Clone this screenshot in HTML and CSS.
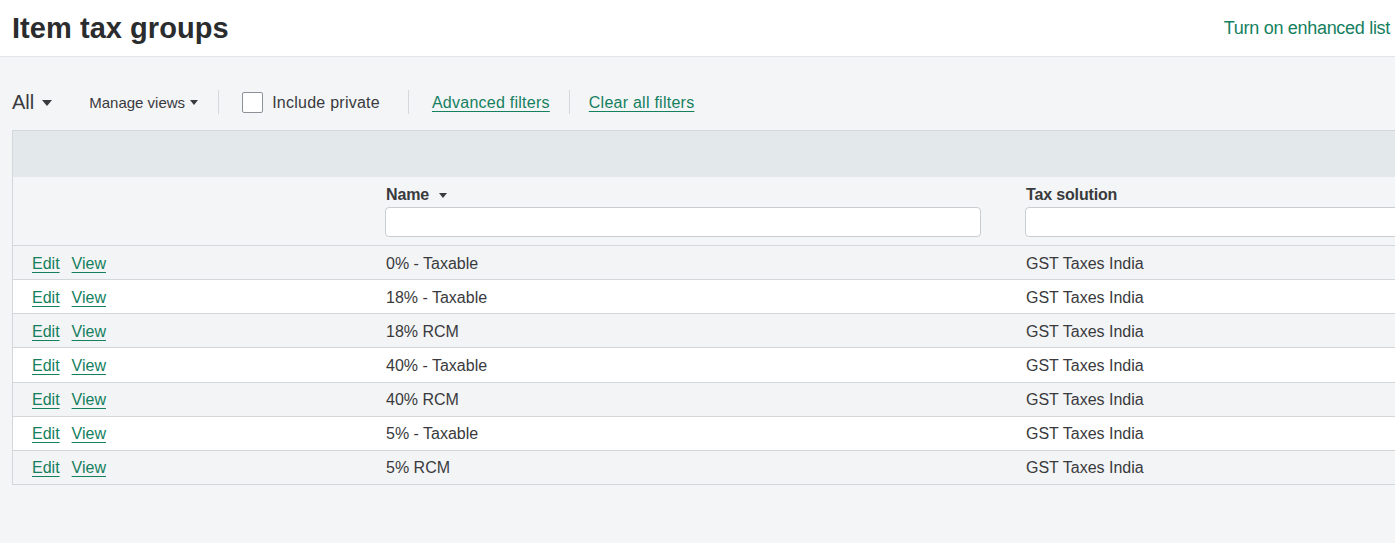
FILE: index.html
```html
<!DOCTYPE html>
<html lang="en">
<head>
<meta charset="utf-8">
<title>Item tax groups</title>
<link rel="stylesheet" href="styles.css">
</head>
<body>
<header class="page-header">
  <h1 class="page-title">Item tax groups</h1>
  <a class="enhanced-link" href="#">Turn on enhanced list</a>
</header>

<div class="toolbar">
  <button class="view-select">All <span class="caret caret-lg"></span></button>
  <button class="manage-views">Manage views <span class="caret caret-sm"></span></button>
  <span class="sep sep-a"></span>
  <label class="private"><span class="checkbox"></span><span class="private-text">Include private</span></label>
  <span class="sep sep-b"></span>
  <a class="filter-link" href="#">Advanced filters</a>
  <span class="sep sep-c"></span>
  <a class="filter-link" href="#">Clear all filters</a>
</div>

<div class="table">
  <div class="band"></div>
  <div class="row head-row">
    <div class="cell actions"></div>
    <div class="cell">
      <div class="col-label">Name <span class="caret caret-sm"></span></div>
      <input class="col-filter" type="text">
    </div>
    <div class="cell">
      <div class="col-label">Tax solution</div>
      <input class="col-filter" type="text">
    </div>
  </div>

  <div class="row data-row">
    <div class="cell actions"><a href="#">Edit</a><a href="#">View</a></div>
    <div class="cell">0% - Taxable</div>
    <div class="cell">GST Taxes India</div>
  </div>
  <div class="row data-row">
    <div class="cell actions"><a href="#">Edit</a><a href="#">View</a></div>
    <div class="cell">18% - Taxable</div>
    <div class="cell">GST Taxes India</div>
  </div>
  <div class="row data-row">
    <div class="cell actions"><a href="#">Edit</a><a href="#">View</a></div>
    <div class="cell">18% RCM</div>
    <div class="cell">GST Taxes India</div>
  </div>
  <div class="row data-row">
    <div class="cell actions"><a href="#">Edit</a><a href="#">View</a></div>
    <div class="cell">40% - Taxable</div>
    <div class="cell">GST Taxes India</div>
  </div>
  <div class="row data-row">
    <div class="cell actions"><a href="#">Edit</a><a href="#">View</a></div>
    <div class="cell">40% RCM</div>
    <div class="cell">GST Taxes India</div>
  </div>
  <div class="row data-row">
    <div class="cell actions"><a href="#">Edit</a><a href="#">View</a></div>
    <div class="cell">5% - Taxable</div>
    <div class="cell">GST Taxes India</div>
  </div>
  <div class="row data-row">
    <div class="cell actions"><a href="#">Edit</a><a href="#">View</a></div>
    <div class="cell">5% RCM</div>
    <div class="cell">GST Taxes India</div>
  </div>
</div>
</body>
</html>
```

FILE: styles.css
```css
* { box-sizing: border-box; }

html, body {
  margin: 0;
  padding: 0;
}

body {
  background: #f4f5f7;
  font-family: "Liberation Sans", Arial, sans-serif;
  color: #393a3d;
  overflow: hidden;
  width: 1395px;
  height: 543px;
}

a { color: #14805e; }

.page-header {
  height: 57px;
  background: #ffffff;
  border-bottom: 1px solid #e3e5e8;
  display: flex;
  align-items: center;
  justify-content: space-between;
  padding: 0 5px 0 12px;
}

.page-title {
  margin: 0;
  font-size: 29px;
  font-weight: 700;
  color: #2b2c2e;
  letter-spacing: 0.05px;
}

.enhanced-link {
  font-size: 18px;
  text-decoration: none;
  color: #148060;
  letter-spacing: -0.3px;
  margin-top: 1px;
}

.toolbar {
  height: 46px;
  margin: 22px 0 5px;
  padding-left: 12px;
  display: flex;
  align-items: center;
  font-size: 16px;
}

.toolbar button {
  background: none;
  border: 0;
  padding: 0;
  font-family: inherit;
  color: #393a3d;
  display: flex;
  align-items: center;
}

.view-select {
  font-size: 20px;
  color: #2b2c2e;
  margin-right: 37px;
}

.manage-views {
  font-size: 15px;
}

.caret {
  display: inline-block;
  width: 0;
  height: 0;
  border-left: 5.5px solid transparent;
  border-right: 5.5px solid transparent;
  border-top: 6px solid #393a3d;
}

.caret-lg { margin-left: 8px; margin-top: 1px; }

.caret-sm {
  border-left-width: 4px;
  border-right-width: 4px;
  border-top-width: 5px;
  margin-left: 5px;
}

.sep {
  width: 1px;
  height: 24px;
  background: #d6d9dc;
}

.sep-a { margin: 0 23px 0 20px; }
.sep-b { margin: 0 23px 0 28px; }
.sep-c { margin: 0 19px 0 19px; }

.private {
  display: flex;
  align-items: center;
  color: #393a3d;
  letter-spacing: 0.25px;
}

.private-text { padding-top: 2px; }

.checkbox {
  width: 21px;
  height: 21px;
  background: #ffffff;
  border: 1px solid #8d9096;
  border-radius: 2px;
  margin-right: 9px;
}

.filter-link {
  color: #14805e;
  letter-spacing: 0.25px;
  margin-top: 2px;
  text-decoration: underline;
  text-underline-offset: 3px;
  text-decoration-thickness: 1px;
}

.table {
  margin-left: 12px;
  width: 1600px;
  border-left: 1px solid #d4d7da;
  border-top: 1px solid #d4d7da;
  background: #ffffff;
}

.band {
  height: 46px;
  background: #e3e9eb;
}

.row {
  display: grid;
  grid-template-columns: 350px 640px 1fr;
  border-bottom: 1px solid #d4d7da;
}

.cell {
  padding: 0 22px;
}

.head-row {
  background: #f3f5f6;
  padding: 9px 0 8px;
}

.col-label {
  font-size: 16px;
  font-weight: 700;
  line-height: 18px;
  letter-spacing: -0.15px;
  margin: 0 0 3px 1px;
  color: #393a3d;
  display: flex;
  align-items: center;
}

.col-label .caret { margin-left: 10px; }

.col-filter {
  display: block;
  width: 100%;
  height: 30px;
  border: 1px solid #c9cdd1;
  border-radius: 4px;
  background: #ffffff;
  margin: 0;
  outline: none;
}

.data-row {
  height: 34.15px;
  align-items: center;
  font-size: 16px;
  padding-top: 2px;
}

.data-row:nth-child(odd) { background: #f3f4f5; }

.data-row .cell { padding-left: 23px; }

.data-row .actions { padding-left: 19px; }

.actions a {
  color: #14805e;
  text-decoration: underline;
  text-underline-offset: 3px;
  text-decoration-thickness: 1px;
  margin-right: 12px;
}
```
